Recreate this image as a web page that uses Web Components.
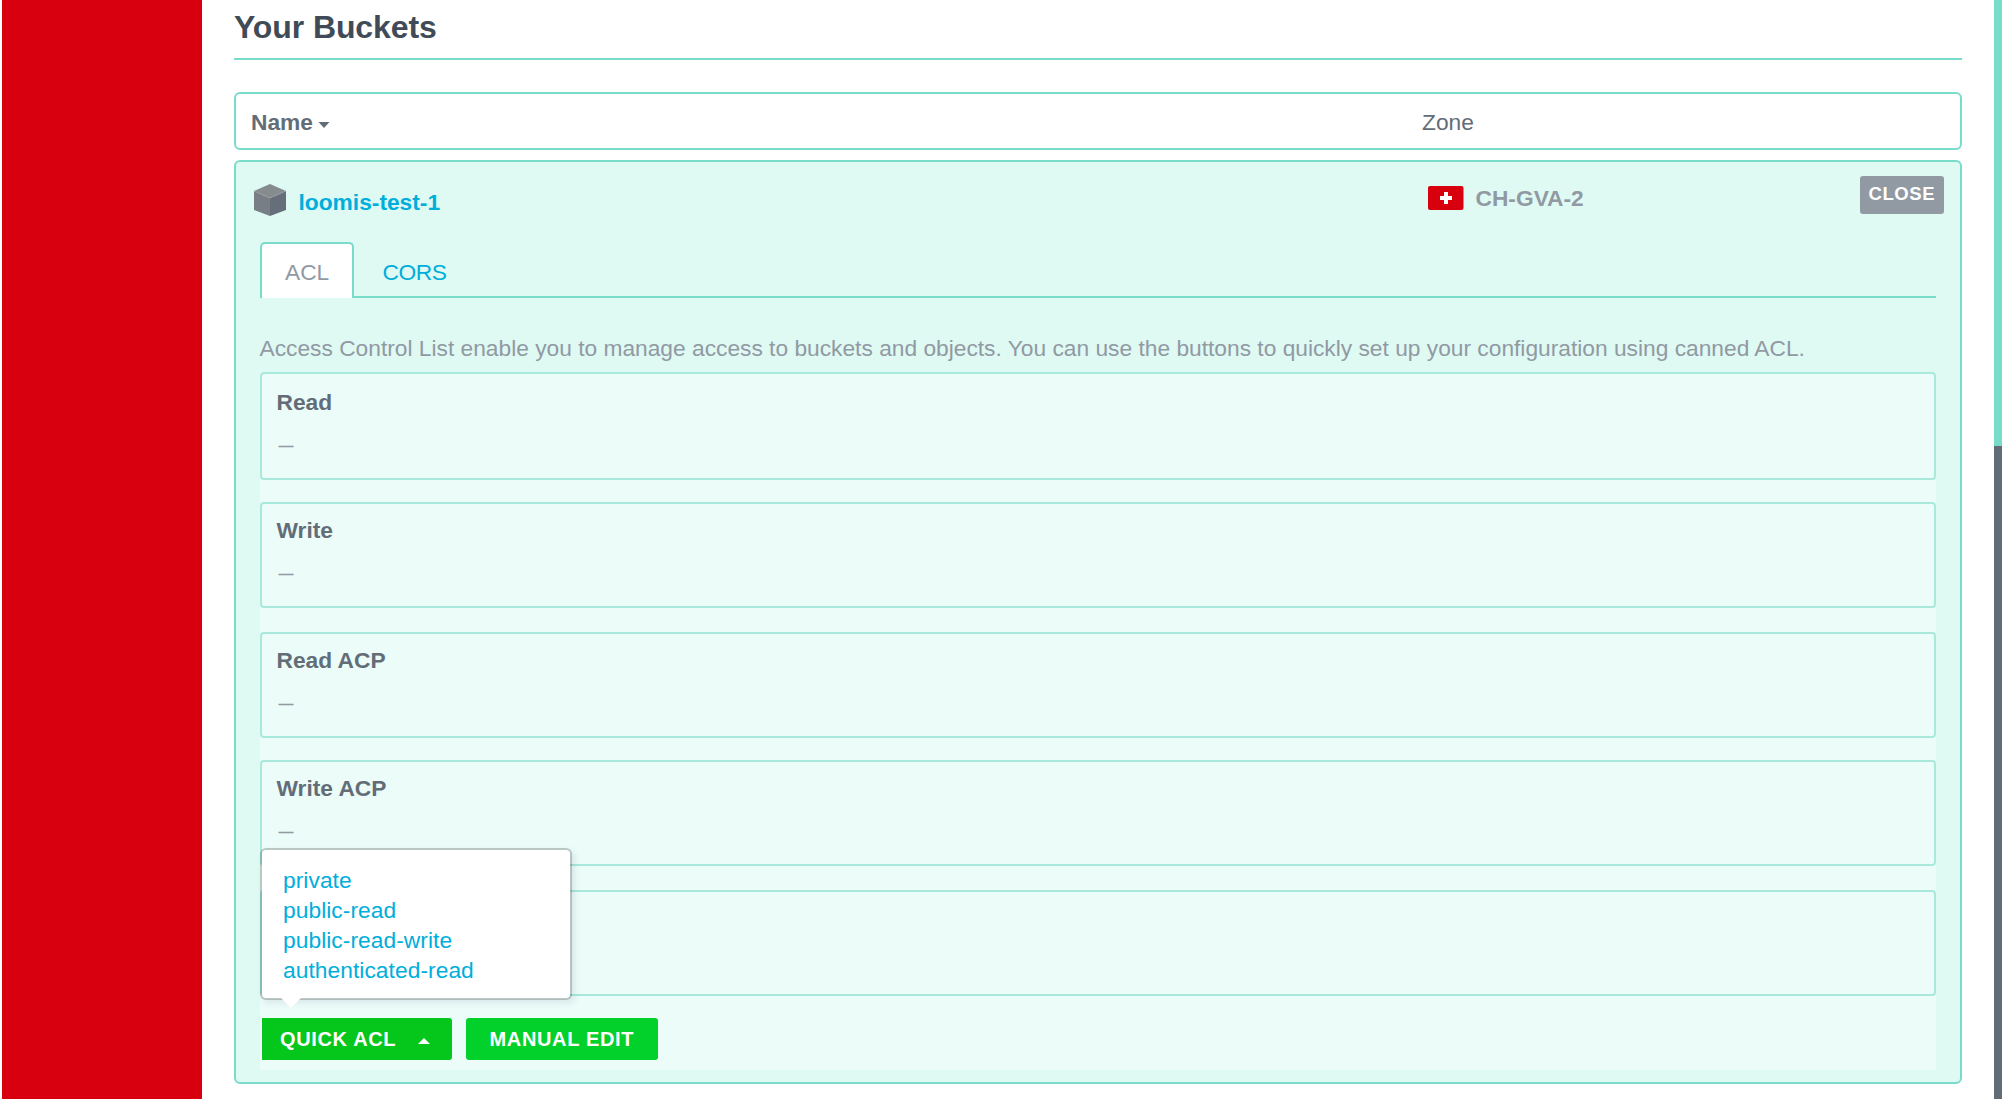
<!DOCTYPE html>
<html lang="en">
<head>
<meta charset="utf-8">
<title>Your Buckets</title>
<style>
html,body{margin:0;height:100%;overflow:hidden;background:#fff}
body{font:22.75px/30px "Liberation Sans",Arial,sans-serif;color:#9199a3}
</style>
</head>
<body>
<bucket-page></bucket-page>
<script>
const define=(name,html)=>{
  const t=document.createElement('template');
  t.innerHTML='<style>*{box-sizing:border-box}:host{box-sizing:border-box;display:block}</style>'+html;
  customElements.define(name,class extends HTMLElement{
    constructor(){super();this.attachShadow({mode:'open'}).append(t.content.cloneNode(true));}
  });
};

define('page-heading',`<style>
:host{height:60px;padding-top:7px;border-bottom:2px solid #79dcca}
h1{margin:0;font-size:32px;line-height:40px;font-weight:700;color:#414b57;letter-spacing:-.1px}
</style><h1><slot></slot></h1>`);

define('bucket-columns',`<style>
:host{display:flex;height:58px;border:2px solid #79dcca;border-radius:6px;padding:13px 16px 0 15px;color:#626d78}
.name{width:1171px;font-weight:700;display:flex}
svg{margin:15px 0 0 5px}
</style><div class="name"><span>Name</span><svg width="12" height="6"><path d="M.5 0h11L6 6z" fill="#626d78"/></svg></div><span>Zone</span>`);

define('cube-icon',`<style>:host{width:32px;height:32px}svg{display:block}</style>
<svg width="32" height="32"><path d="M16 0 32 7 16 14 0 7z" fill="#868b8e"/><path d="M0 7 16 14V32L0 26z" fill="#777e85"/><path d="M32 7 16 14V32L32 26z" fill="#656e79"/><path d="M0 7 16 14 32 7" fill="none" stroke="#a0a6a9" stroke-width=".8" stroke-dasharray="2 1"/></svg>`);

define('swiss-flag',`<style>:host{width:36px;height:24px}svg{display:block}</style>
<svg width="36" height="24"><rect width="35.5" height="24" rx="2" fill="#d8000f"/><path d="M16 6h4v4h4v4h-4v4h-4v-4h-4v-4h4z" fill="#fff"/></svg>`);

define('close-button',`<style>
:host{width:84px;height:38px;border-radius:3px;background:#9199a3;color:#fff;font-size:18.5px;font-weight:700;line-height:26px;padding:5px 0 0 8.5px;letter-spacing:.6px}
</style><slot></slot>`);

define('bucket-summary',`<style>
:host{display:flex;align-items:flex-start;height:80px;padding:14px 16px 0 18px;font-weight:700}
cube-icon{margin:8px 12.5px 0 0}
.name{width:1129.5px;padding-top:11px;color:#00aedb}
swiss-flag{margin:10px 11.5px 0 0}
.zone{padding-top:7px}
close-button{margin-left:auto}
</style><cube-icon></cube-icon><span class="name"><slot></slot></span><swiss-flag></swiss-flag><span class="zone"><slot name="zone"></slot></span><close-button>CLOSE</close-button>`);

define('tab-bar',`<style>
:host{display:flex;height:56px;margin:0 24px}
.on{width:94px;background:#fff;border:2px solid #79dcca;border-bottom:0;border-radius:5px 5px 0 0;padding:13px 0 0 23px}
.rest{flex:1;border-bottom:2px solid #79dcca;padding:15px 0 0 28.5px;color:#00aedb;letter-spacing:-.4px}
</style><div class="on">ACL</div><div class="rest">CORS</div>`);

define('acl-box',`<style>
:host{height:106px;border:2px solid #a9e9dc;border-radius:4px;padding:11px 16px 0 14.5px}
:host([first]){height:108px;padding-top:13px}
b{display:block;color:#626d78}
i{display:block;font-style:normal;font-size:15px;font-weight:700;line-height:30px;margin:14px 0 0 2px;height:30px}
</style><b><slot></slot></b><i><slot name="grants"></slot></i>`);

define('acl-menu',`<style>
:host{position:absolute;left:0;top:476px;width:312px;height:152px;border:2px solid rgba(0,0,0,.2);border-radius:6px;background:#fff;background-clip:padding-box;box-shadow:3px 3px 6px rgba(60,50,90,.1);padding:15px 0 0 21px;color:#00aedb;letter-spacing:.06px}
svg{position:absolute;left:18px;top:147px}
</style><slot></slot><svg width="22" height="12"><path d="M0 0h22L11 11z" fill="#fff"/></svg>`);

define('action-button',`<style>
:host{display:flex;height:42px;border-radius:3px;background:#02d02b;color:#fff;font-size:20px;font-weight:700;line-height:28px;padding-top:7px;width:192px;padding-left:23.5px;letter-spacing:.65px}
:host([open]){background:#05c61b;border-radius:0 3px 3px 0;width:191px;padding-left:18px;border-left:1px solid #fff}
svg{display:none;margin:13px 0 0 21.5px}
:host([open]) svg{display:block}
</style><slot></slot><svg width="12" height="6"><path d="M0 6h12L6 0z" fill="#fff"/></svg>`);

define('acl-panel',`<style>
.text{margin:0 24px 0 23.5px;height:74px;padding-top:35px;white-space:nowrap}
.list{position:relative;margin:0 24px;height:698px;background:#ebfcf9;display:flex;flex-direction:column}
acl-box{margin-bottom:22px}
acl-box.w{margin-bottom:24px}
.buttons{display:flex;gap:14px;padding-left:1px}
</style><div class="text">Access Control List enable you to manage access to buckets and objects. You can use the buttons to quickly set up your configuration using canned ACL.</div>
<div class="list">
<acl-box first>Read<span slot="grants">—</span></acl-box>
<acl-box class="w">Write<span slot="grants">—</span></acl-box>
<acl-box>Read ACP<span slot="grants">—</span></acl-box>
<acl-box class="w">Write ACP<span slot="grants">—</span></acl-box>
<acl-box></acl-box>
<div class="buttons"><action-button open>QUICK ACL</action-button><action-button>MANUAL EDIT</action-button></div>
<acl-menu><div>private</div><div>public-read</div><div>public-read-write</div><div>authenticated-read</div></acl-menu>
</div>`);

define('bucket-card',`<style>
:host{height:924px;margin-top:10px;border:2px solid #79dcca;border-radius:6px;background:#dffaf3}
</style><bucket-summary>loomis-test-1<span slot="zone">CH-GVA-2</span></bucket-summary><tab-bar></tab-bar><acl-panel></acl-panel>`);

define('bucket-page',`<style>
:host{display:flex;height:1099px;padding-left:2px}
.side{width:200px;background:#d8000f}
main{flex:1;padding:0 32px}
bucket-columns{margin-top:32px}
.scroll{width:8px;background:#616c77}
.scroll div{height:446px;background:#79dcca}
</style><div class="side"></div><main><page-heading>Your Buckets</page-heading><bucket-columns></bucket-columns><bucket-card></bucket-card></main><div class="scroll"><div></div></div>`);
</script>
</body>
</html>
